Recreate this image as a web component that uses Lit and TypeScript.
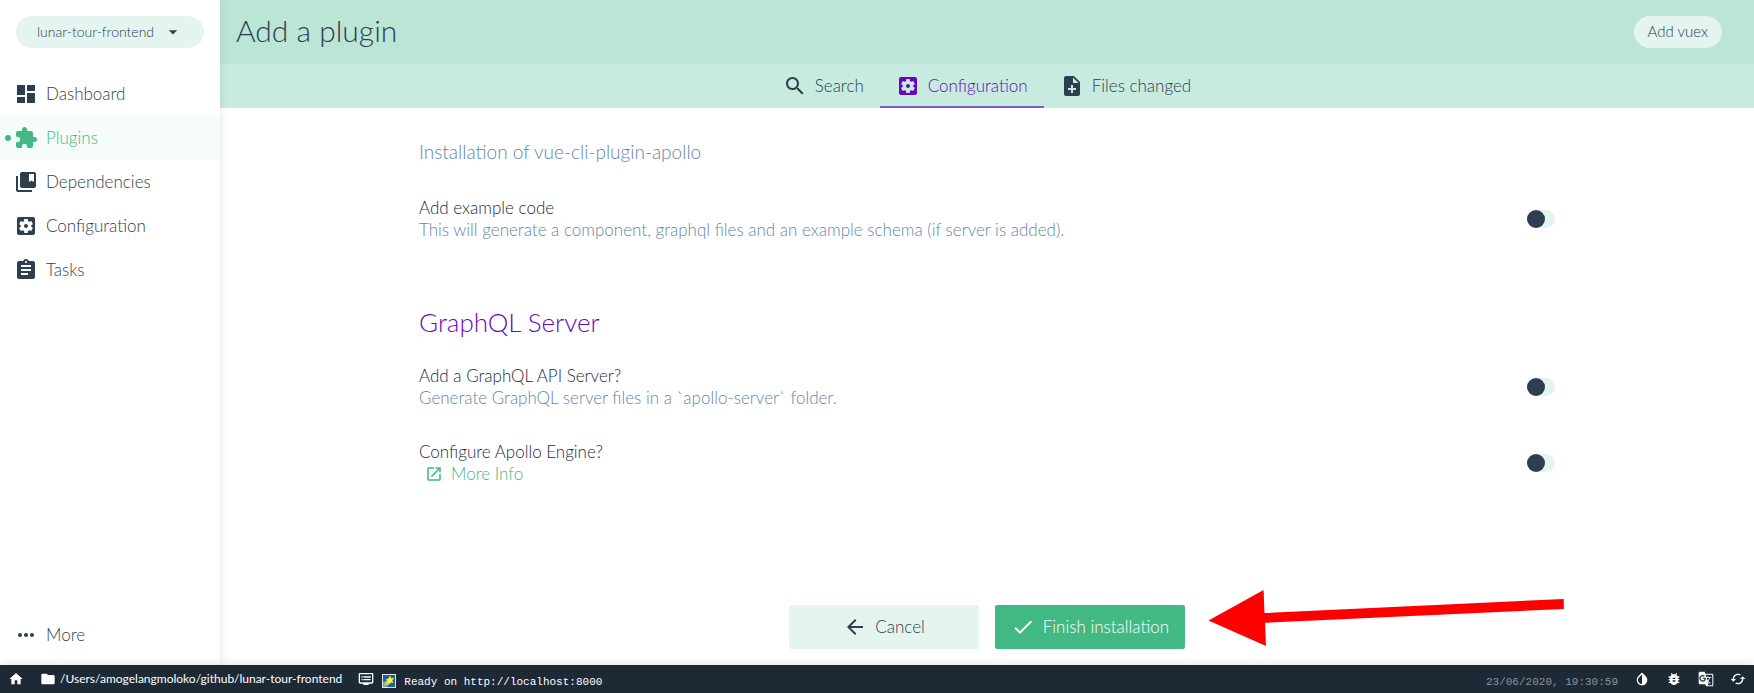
import { LitElement, html, css, svg } from "lit";
import { customElement, property, state } from "lit/decorators.js";
import { classMap } from "lit/directives/class-map.js";

const ICONS: Record<string, string> = {
  dashboard: "M3 13h8V3H3v10zm0 8h8v-6H3v6zm10 0h8V11h-8v10zm0-18v6h8V3h-8z",
  extension:
    "M20.5 11H19V7c0-1.1-.9-2-2-2h-4V3.5C13 2.12 11.88 1 10.5 1S8 2.12 8 3.5V5H4c-1.1 0-1.99.9-1.99 2v3.8H3.5c1.49 0 2.7 1.21 2.7 2.7s-1.21 2.7-2.7 2.7H2V20c0 1.1.9 2 2 2h3.8v-1.5c0-1.49 1.21-2.7 2.7-2.7 1.49 0 2.7 1.21 2.7 2.7V22H17c1.1 0 2-.9 2-2v-4h1.5c1.38 0 2.5-1.12 2.5-2.5S21.88 11 20.5 11z",
  collections:
    "M4 6H2v14c0 1.1.9 2 2 2h14v-2H4V6zM20 2H8c-1.1 0-2 .9-2 2v12c0 1.1.9 2 2 2h12c1.1 0 2-.9 2-2V4c0-1.1-.9-2-2-2zm0 10l-2.5-1.5L15 12V4h5v8z",
  settings:
    "M12 10c-1.1 0-2 .9-2 2s.9 2 2 2 2-.9 2-2-.9-2-2-2zm7-7H5c-1.11 0-2 .9-2 2v14c0 1.1.89 2 2 2h14c1.11 0 2-.9 2-2V5c0-1.1-.89-2-2-2zm-1.75 9c0 .23-.02.46-.05.68l1.48 1.16c.13.11.17.3.08.45l-1.4 2.42c-.09.15-.27.21-.43.15l-1.74-.7c-.36.28-.76.51-1.18.69l-.26 1.85c-.03.17-.18.3-.35.3h-2.8c-.17 0-.32-.13-.35-.29l-.26-1.85c-.43-.18-.82-.41-1.18-.69l-1.74.7c-.16.06-.34 0-.43-.15l-1.4-2.42c-.09-.15-.05-.34.08-.45l1.48-1.16c-.03-.23-.05-.46-.05-.69s.02-.46.05-.68l-1.48-1.16c-.13-.11-.17-.3-.08-.45l1.4-2.42c.09-.15.27-.21.43-.15l1.74.7c.36-.28.76-.51 1.18-.69l.26-1.85c.03-.17.18-.3.35-.3h2.8c.17 0 .32.13.35.29l.26 1.85c.43.18.82.41 1.18.69l1.74-.7c.16-.06.34 0 .43.15l1.4 2.42c.09.15.05.34-.08.45l-1.48 1.16c.03.23.05.46.05.69z",
  assignment:
    "M19 3h-4.18C14.4 1.84 13.3 1 12 1c-1.3 0-2.4.84-2.82 2H5c-1.1 0-2 .9-2 2v14c0 1.1.9 2 2 2h14c1.1 0 2-.9 2-2V5c0-1.1-.9-2-2-2zm-7 0c.55 0 1 .45 1 1s-.45 1-1 1-1-.45-1-1 .45-1 1-1zm2 14H7v-2h7v2zm3-4H7v-2h10v2zm0-4H7V7h10v2z",
  more: "M6 10c-1.1 0-2 .9-2 2s.9 2 2 2 2-.9 2-2-.9-2-2-2zm12 0c-1.1 0-2 .9-2 2s.9 2 2 2 2-.9 2-2-.9-2-2-2zm-6 0c-1.1 0-2 .9-2 2s.9 2 2 2 2-.9 2-2-.9-2-2-2z",
  search:
    "M15.5 14h-.79l-.28-.27C15.41 12.59 16 11.11 16 9.5 16 5.91 13.09 3 9.5 3S3 5.91 3 9.5 5.91 16 9.5 16c1.61 0 3.09-.59 4.23-1.57l.27.28v.79l5 4.99L20.49 19l-4.99-5zm-6 0C7.01 14 5 11.99 5 9.5S7.01 5 9.5 5 14 7.01 14 9.5 11.99 14 9.5 14z",
  noteAdd:
    "M14 2H6c-1.1 0-1.99.9-1.99 2L4 20c0 1.1.89 2 1.99 2H18c1.1 0 2-.9 2-2V8l-6-6zm2 14h-3v3h-2v-3H8v-2h3v-3h2v3h3v2zm-3-7V3.5L18.5 9H13z",
  back: "M20 11H7.83l5.59-5.59L12 4l-8 8 8 8 1.41-1.41L7.83 13H20v-2z",
  check: "M9 16.17L4.83 12l-1.42 1.41L9 19 21 7l-1.41-1.41z",
  openInNew:
    "M19 19H5V5h7V3H5c-1.11 0-2 .9-2 2v14c0 1.1.89 2 2 2h14c1.1 0 2-.9 2-2v-7h-2v7zM14 3v2h3.59l-9.83 9.83 1.41 1.41L19 6.41V10h2V3h-7z",
  dropDown: "M7 10l5 5 5-5z",
  home: "M10 20v-6h4v6h5v-8h3L12 3 2 12h3v8z",
  folder:
    "M10 4H4c-1.1 0-1.99.9-1.99 2L2 18c0 1.1.9 2 2 2h16c1.1 0 2-.9 2-2V8c0-1.1-.9-2-2-2h-8l-2-2z",
  dvr: "M21 3H3c-1.1 0-2 .9-2 2v12c0 1.1.9 2 2 2h5v2h8v-2h5c1.1 0 1.99-.9 1.99-2L23 5c0-1.1-.9-2-2-2zm0 14H3V5h18v12zm-2-9H8v2h11V8zm0 4H8v2h11v-2zM7 8H5v2h2V8zm0 4H5v2h2v-2z",
  invert:
    "M17.66 7.93L12 2.27 6.34 7.93c-3.12 3.12-3.12 8.19 0 11.31C7.9 20.8 9.95 21.58 12 21.58c2.05 0 4.1-.78 5.66-2.34 3.12-3.12 3.12-8.19 0-11.31zM12 19.59c-1.6 0-3.11-.62-4.24-1.76C6.62 16.69 6 15.19 6 13.59s.62-3.11 1.76-4.24L12 5.1v14.49z",
  bug: "M20 8h-2.81c-.45-.78-1.07-1.45-1.82-1.96L17 4.41 15.59 3l-2.17 2.17C12.96 5.06 12.49 5 12 5c-.49 0-.96.06-1.41.17L8.41 3 7 4.41l1.62 1.63C7.88 6.55 7.26 7.22 6.81 8H4v2h2.09c-.05.33-.09.66-.09 1v1H4v2h2v1c0 .34.04.67.09 1H4v2h2.81c1.04 1.79 2.97 3 5.19 3s4.15-1.21 5.19-3H20v-2h-2.09c.05-.33.09-.66.09-1v-1h2v-2h-2v-1c0-.34-.04-.67-.09-1H20V8zm-6 8h-4v-2h4v2zm0-4h-4v-2h4v2z",
  translate:
    "M21 4H11l-1-3H3c-1.1 0-2 .9-2 2v15c0 1.1.9 2 2 2h8l1 3h9c1.1 0 2-.9 2-2V6c0-1.1-.9-2-2-2zM7 16c-2.76 0-5-2.24-5-5s2.24-5 5-5c1.35 0 2.48.5 3.35 1.3L9.03 8.57c-.38-.36-1.04-.78-2.03-.78-1.74 0-3.15 1.44-3.15 3.21S5.26 14.21 7 14.21c2.01 0 2.84-1.44 2.92-2.41H7v-1.71h4.68c.07.31.12.61.12 1.02C11.8 13.97 9.89 16 7 16zm6.17-5.42h3.7c-.43 1.25-1.11 2.43-2.05 3.47-.31-.35-.6-.72-.86-1.1l-.79-2.37zm8.33 9.92c0 .55-.45 1-1 1H14l2-2.5-1.04-3.1 3.1 3.1.92-.92-3.3-3.25.02-.02c1.13-1.25 1.93-2.69 2.4-4.22H20v-1.3h-4.53V8h-1.29v1.29h-1.44L11.46 5.5h9.04c.55 0 1 .45 1 1v14z",
  cached:
    "M19 8l-4 4h3c0 3.31-2.69 6-6 6-1.01 0-1.97-.25-2.8-.7l-1.46 1.46C8.97 19.54 10.43 20 12 20c4.42 0 8-3.58 8-8h3l-4-4zM6 12c0-3.31 2.69-6 6-6 1.01 0 1.97.25 2.8.7l1.46-1.46C15.03 4.46 13.57 4 12 4c-4.42 0-8 3.58-8 8H1l4 4 4-4H6z",
};

@customElement("ui-icon")
class UiIcon extends LitElement {
  @property() name = "";
  static styles = css`
    :host {
      display: block;
      flex: none;
      width: 24px;
      height: 24px;
    }
    svg {
      display: block;
      width: 100%;
      height: 100%;
      fill: currentColor;
    }
  `;
  render() {
    return html`<svg viewBox="0 0 24 24" aria-hidden="true">
      ${svg`<path d=${ICONS[this.name] ?? ""}></path>`}
    </svg>`;
  }
}

const NAV = [
  { icon: "dashboard", label: "Dashboard" },
  { icon: "extension", label: "Plugins" },
  { icon: "collections", label: "Dependencies" },
  { icon: "settings", label: "Configuration" },
  { icon: "assignment", label: "Tasks" },
];

const TABS = [
  { icon: "search", label: "Search" },
  { icon: "settings", label: "Configuration" },
  { icon: "noteAdd", label: "Files changed" },
];

const TOOLS = [
  { icon: "invert", label: "Toggle dark mode" },
  { icon: "bug", label: "Report a bug" },
  { icon: "translate", label: "Help translate" },
  { icon: "cached", label: "Reset plugin API" },
];

@customElement("app-root")
class AppRoot extends LitElement {
  @state() private page = "Plugins";
  @state() private tab = "Configuration";

  static styles = css`
    :host {
      display: flex;
      flex-direction: column;
      min-height: 100vh;
      background: #fff;
      color: #2c3e50;
      font: 300 17px/22px Lato, "Open Sans", sans-serif;
    }
    *,
    *::before {
      box-sizing: border-box;
    }
    button,
    select {
      margin: 0;
      padding: 0;
      border: 0;
      background: none;
      color: inherit;
      font: inherit;
      cursor: pointer;
    }
    a {
      color: inherit;
      text-decoration: none;
    }
    h1,
    h2,
    p {
      margin: 0;
      font-weight: 300;
    }
    .body {
      flex: 1;
      display: flex;
    }
    .sidebar {
      position: relative;
      flex: none;
      width: 220px;
      display: flex;
      flex-direction: column;
      padding-bottom: 8px;
      background: #fff;
      box-shadow: 0 0 10px rgba(0, 0, 0, 0.1);
    }
    .project {
      display: flex;
      align-items: center;
      justify-content: center;
      height: 32px;
      margin: 16px 16px 24px;
      border-radius: 16px;
      background: #e4f5ef;
      font-size: 14px;
    }
    .project select {
      appearance: none;
      height: 30px;
      padding-right: 28px;
      margin-right: -20px;
    }
    .project ui-icon {
      width: 20px;
      height: 20px;
      pointer-events: none;
    }
    .nav {
      flex: 1;
      display: flex;
      flex-direction: column;
    }
    .nav-item {
      position: relative;
      display: flex;
      align-items: center;
      gap: 8px;
      height: 44px;
      padding: 0 14px;
    }
    .nav-item.last {
      margin-top: auto;
    }
    .nav-item.active {
      background: #f6fcfa;
      color: #42b983;
    }
    .nav-item.active::before {
      content: "";
      position: absolute;
      left: 5px;
      top: 19px;
      width: 6px;
      height: 6px;
      border-radius: 50%;
      background: #42b983;
    }
    .main {
      flex: 1;
      min-width: 0;
      display: flex;
      flex-direction: column;
    }
    .header {
      display: flex;
      align-items: center;
      justify-content: space-between;
      height: 64px;
      padding: 0 32px 0 16px;
      background: #bbe6d6;
    }
    .title {
      padding-bottom: 4px;
      font-size: 30px;
      line-height: 32px;
    }
    .pill {
      height: 32px;
      padding: 0 14px 2px;
      border-radius: 16px;
      background: #e4f5ef;
      font-size: 15px;
    }
    .tabs {
      display: flex;
      justify-content: center;
      height: 44px;
      background: #c8ebdf;
    }
    .tab {
      display: flex;
      align-items: center;
      gap: 8px;
      padding: 0 16px;
      border: solid transparent;
      border-width: 2px 0;
    }
    .tab.active {
      color: #6806c1;
      border-bottom-color: #8859cd;
    }
    .content {
      flex: 1;
      width: 100%;
      max-width: 1200px;
      margin: 0 auto;
      padding: 33px 32px 24px;
    }
    .subtitle {
      padding-bottom: 18px;
      color: #6486ab;
      font-size: 19px;
    }
    .section {
      padding: 47px 0 9px;
      color: #6806c1;
      font-size: 26px;
      line-height: 36px;
    }
    .prompt {
      display: flex;
      align-items: center;
      justify-content: space-between;
      gap: 32px;
      padding: 16px 0;
    }
    .label {
      color: #1c2c3c;
    }
    .description {
      color: #6486ab;
    }
    .more-info {
      display: flex;
      align-items: center;
      gap: 8px;
      padding-left: 6px;
      color: #42b983;
    }
    .more-info ui-icon {
      width: 18px;
      height: 18px;
    }
    .switch {
      appearance: none;
      flex: none;
      display: flex;
      width: 28px;
      height: 18px;
      margin: 0;
      border-radius: 9px;
      background: #e4f5ef;
      cursor: pointer;
    }
    .switch::before {
      content: "";
      width: 18px;
      height: 18px;
      border-radius: 50%;
      background: #2c3e50;
    }
    .switch:checked {
      justify-content: flex-end;
    }
    .switch:checked::before {
      background: #42b983;
    }
    .actions {
      position: relative;
      align-self: center;
      display: flex;
      gap: 16px;
      padding-bottom: 16px;
    }
    .action {
      display: flex;
      align-items: center;
      justify-content: center;
      gap: 8px;
      width: 190px;
      height: 44px;
      border-radius: 2px;
      background: #e4f5ef;
    }
    .action.primary {
      background: #42b983;
      color: #fff;
    }
    .pointer {
      position: absolute;
      left: 100%;
      top: -16px;
      width: 380px;
      height: 60px;
      fill: #f00;
      pointer-events: none;
    }
    .status {
      position: relative;
      display: flex;
      align-items: center;
      justify-content: space-between;
      height: 28px;
      background: #1d2935;
      color: #fff;
      font-size: 12px;
      line-height: 28px;
      box-shadow: 0 0 10px rgba(0, 0, 0, 0.15);
    }
    .group,
    .entry {
      display: flex;
      align-items: center;
    }
    .entry {
      height: 28px;
      padding: 0 8px;
      gap: 4px;
      color: #fff;
    }
    .path {
      font-weight: 400;
    }
    .entry.log {
      gap: 8px;
    }
    .status ui-icon {
      width: 16px;
      height: 16px;
    }
    .emoji {
      width: 14px;
      height: 14px;
      padding-top: 4px;
      box-sizing: content-box;
    }
    .mono {
      padding-top: 6px;
      font: 11px/20px "Liberation Mono", monospace;
    }
    .time {
      padding-right: 8px;
      color: #8e949a;
    }
  `;

  private prompt(id: string, label: string, detail: unknown) {
    return html`<div class="prompt">
      <div>
        <label class="label" for=${id}>${label}</label>
        ${detail}
      </div>
      <input class="switch" type="checkbox" role="switch" id=${id} />
    </div>`;
  }

  render() {
    return html`
      <div class="body">
        <aside class="sidebar">
          <div class="project">
            <select aria-label="Project">
              <option>lunar-tour-frontend</option>
            </select>
            <ui-icon name="dropDown"></ui-icon>
          </div>
          <nav class="nav">
            ${NAV.map(
              (n) => html`<a
                href="#"
                class=${classMap({ "nav-item": true, active: n.label === this.page })}
                @click=${() => (this.page = n.label)}
                ><ui-icon name=${n.icon}></ui-icon><span>${n.label}</span></a
              >`
            )}
            <a class="nav-item last" href="#"
              ><ui-icon name="more"></ui-icon><span>More</span></a
            >
          </nav>
        </aside>
        <main class="main">
          <header class="header">
            <h1 class="title">Add a plugin</h1>
            <button class="pill">Add vuex</button>
          </header>
          <div class="tabs" role="tablist">
            ${TABS.map(
              (t) => html`<button
                role="tab"
                aria-selected=${t.label === this.tab}
                class=${classMap({ tab: true, active: t.label === this.tab })}
                @click=${() => (this.tab = t.label)}
              >
                <ui-icon name=${t.icon}></ui-icon><span>${t.label}</span>
              </button>`
            )}
          </div>
          <div class="content">
            <p class="subtitle">Installation of vue-cli-plugin-apollo</p>
            ${this.prompt(
              "example",
              "Add example code",
              html`<p class="description">
                This will generate a component, graphql files and an example schema (if server is
                added).
              </p>`
            )}
            <h2 class="section">GraphQL Server</h2>
            ${this.prompt(
              "server",
              "Add a GraphQL API Server?",
              html`<p class="description">
                Generate GraphQL server files in a \`apollo-server\` folder.
              </p>`
            )}
            ${this.prompt(
              "engine",
              "Configure Apollo Engine?",
              html`<a class="more-info" href="#"
                ><ui-icon name="openInNew"></ui-icon><span>More Info</span></a
              >`
            )}
          </div>
          <div class="actions">
            <button class="action"><ui-icon name="back"></ui-icon><span>Cancel</span></button>
            <button class="action primary">
              <ui-icon name="check"></ui-icon><span>Finish installation</span>
            </button>
            <svg class="pointer" viewBox="0 0 380 60" aria-hidden="true">
              <path
                d="M23.5 31.5L78.6 1l.9 23L378.7 10l.2 10L80 33.7 81 57z"
              ></path>
            </svg>
          </div>
        </main>
      </div>
      <footer class="status">
        <div class="group">
          <a class="entry" href="#" aria-label="Home"><ui-icon name="home"></ui-icon></a>
          <div class="entry">
            <ui-icon name="folder"></ui-icon>
            <span class="path">/Users/amogelangmoloko/github/lunar-tour-frontend</span>
          </div>
          <div class="entry log">
            <ui-icon name="dvr"></ui-icon>
            <svg class="emoji" viewBox="0 0 14 14" aria-hidden="true">
              <rect width="14" height="14" fill="#dfe8ec"></rect>
              <rect x="1" y="1" width="12" height="12" fill="#1f5f95"></rect>
              <path d="M1 13V8l5-2 3 3-4 4z" fill="#6fa3b8"></path>
              <path d="M2 12l4-8 4 4z" fill="#d9d84a"></path>
              <path
                d="M8 1.5l1.2 2.7 3.1-.4-2 2.4 1.4 2.8-3-.8-2.4 2 .1-3.1-2.7-1.6 3-.9z"
                fill="#fff12e"
              ></path>
            </svg>
            <span class="mono">Ready on http://localhost:8000</span>
          </div>
        </div>
        <div class="group">
          <span class="mono time">23/06/2020, 19:30:59</span>
          ${TOOLS.map(
            (t) => html`<button class="entry" aria-label=${t.label}>
              <ui-icon name=${t.icon}></ui-icon>
            </button>`
          )}
        </div>
      </footer>
    `;
  }
}
